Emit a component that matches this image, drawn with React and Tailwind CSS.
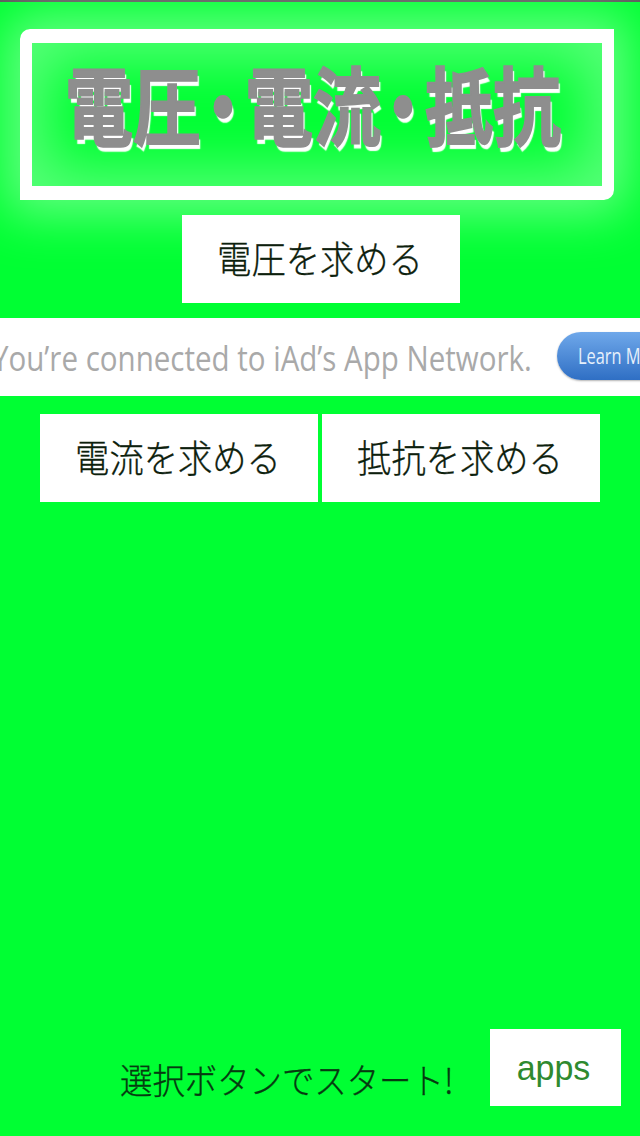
import React from "react";

const jp = "font-['Noto_Sans_CJK_JP','Noto_Sans',sans-serif]";

function Btn({ children, className }) {
  return (
    <div className={`flex items-center justify-center bg-white ${className}`}>
      <span className={`${jp} font-light text-[34.3px] leading-none text-[#0c200c] scale-y-110 -translate-x-[1px] -translate-y-[2px] [-webkit-text-stroke:0.3px_#0c200c]`}>
        {children}
      </span>
    </div>
  );
}

export default function App() {
  return (
    <div className="w-[640px] h-[1136px] overflow-hidden flex flex-col bg-[#00ff33]">
      <div className="h-[2px] bg-[#5a5a5a] shrink-0" />

      {/* title frame */}
      <div className="mt-[27px] ml-[20px] w-[594px] h-[171px] shrink-0 flex items-center justify-center border-x-[12px] border-y-[14px] border-white rounded-tl-[10px] rounded-br-[10px] shadow-[0_0_50px_14px_rgba(255,255,255,0.4),inset_0_0_56px_16px_rgba(255,255,255,0.34)]">
        <span
          className={`${jp} font-bold text-[68px] leading-none whitespace-nowrap text-[#8e8e8e] scale-y-[1.25] -translate-x-[4px] -translate-y-[12px] [font-feature-settings:'palt'] [-webkit-text-stroke:1.5px_#8e8e8e] [text-shadow:2px_4px_1px_#fff]`}
        >
          電圧<span className="mx-[5px]">・</span>電流<span className="mx-[5px]">・</span>抵抗
        </span>
      </div>

      <Btn className="mt-[15px] ml-[182px] w-[278px] h-[88px] shrink-0">電圧を求める</Btn>

      {/* ad banner */}
      <div className="mt-[15px] h-[78px] shrink-0 bg-white flex items-center overflow-hidden">
        <span className="ml-[-8px] font-['Open_Sans',sans-serif] text-[34px] leading-none whitespace-nowrap text-[#a9a9a9] scale-x-[0.868] origin-left w-[565px] shrink-0 translate-y-[1px]">
          You’re connected to iAd’s App Network.
        </span>
        <div className="w-[110px] h-[48px] shrink-0 pl-[21px] flex items-center rounded-l-[24px] bg-gradient-to-b from-[#6fa8ea] to-[#2f6fc4] shadow-[0_1px_2px_rgba(0,0,0,0.3)] -translate-y-[1px]">
          <span className="font-['Open_Sans',sans-serif] text-[21px] leading-none whitespace-nowrap text-[#e6f0fb] scale-x-[0.78] origin-left">
            Learn More
          </span>
        </div>
      </div>

      <div className="mt-[18px] ml-[40px] flex gap-[4px] shrink-0">
        <Btn className="w-[278px] h-[88px]">電流を求める</Btn>
        <Btn className="w-[278px] h-[88px]">抵抗を求める</Btn>
      </div>

      {/* bottom row */}
      <div className="mt-auto mb-[30px] ml-[120px] mr-[19px] flex items-start justify-between">
        <span className={`${jp} font-light mt-[34px] text-[32.4px] leading-none whitespace-nowrap text-[#063a10] scale-y-110 [-webkit-text-stroke:0.3px_#063a10]`}>
          選択ボタンでスタート!
        </span>
        <div className="w-[131px] h-[77px] bg-white flex items-center justify-center">
          <span className="font-['Liberation_Sans',sans-serif] text-[34px] leading-none text-[#2f8a2f] scale-y-105 -translate-x-[2px] -translate-y-[1px]">apps</span>
        </div>
      </div>
    </div>
  );
}
